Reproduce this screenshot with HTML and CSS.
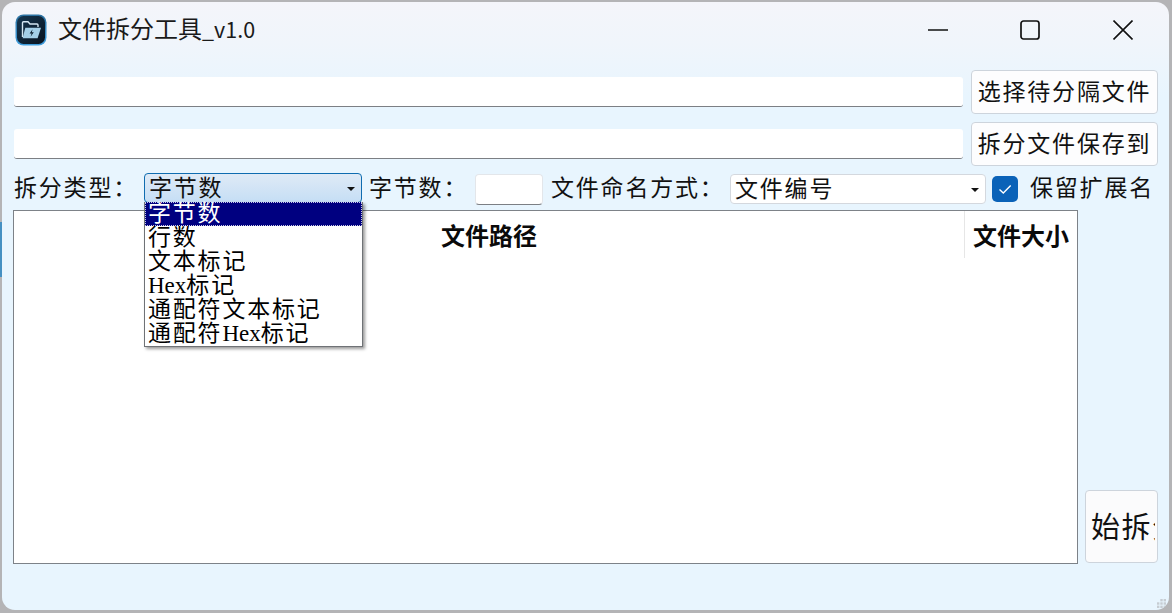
FILE: index.html
```html
<!DOCTYPE html>
<html lang="zh-CN">
<head>
<meta charset="utf-8">
<title>文件拆分工具_v1.0</title>
<link rel="stylesheet" href="styles.css">
</head>
<body>
<div class="window">
  <header class="titlebar">
    <svg class="app-icon" viewBox="0 0 32 32" aria-hidden="true">
      <defs>
        <linearGradient id="ring" x1="0" y1="0" x2="0" y2="1"><stop offset="0" stop-color="#2a6f9e"/><stop offset="1" stop-color="#3f9fe0"/></linearGradient>
        <linearGradient id="tile" x1="0" y1="0" x2="1" y2="1"><stop offset="0" stop-color="#143650"/><stop offset="1" stop-color="#0a1420"/></linearGradient>
      </defs>
      <rect x="0.5" y="0.5" width="31" height="31" rx="8" fill="url(#ring)"/>
      <rect x="2" y="2" width="28" height="28" rx="6.5" fill="url(#tile)"/>
      <path d="M7.5 23V8.8a1 1 0 0 1 1-1H13l2 2.2h7a1 1 0 0 1 1 1V13" fill="none" stroke="#d5e8f4" stroke-width="1.4"/>
      <path d="M10.3 13.8H26L22.6 24.2H7.6z" fill="#a4d0e8"/>
      <path d="M17.6 15.2l-3 4.4h2l-1 3.2 3.2-4.6h-2z" fill="#0e2233"/>
    </svg>
    <span class="title">文件拆分工具<span class="version">_v1.0</span></span>
    <div class="controls">
      <span class="ctl"><svg viewBox="0 0 20 20" width="20" height="20"><path d="M0 10h20" stroke="#111" stroke-width="1.6" fill="none"/></svg></span>
      <span class="ctl"><svg viewBox="0 0 20 20" width="20" height="20"><rect x="1" y="1" width="18" height="18" rx="2.5" stroke="#111" stroke-width="1.7" fill="none"/></svg></span>
      <span class="ctl"><svg viewBox="0 0 20 20" width="20" height="20"><path d="M0.5 0.5l19 19M19.5 0.5l-19 19" stroke="#111" stroke-width="1.6" fill="none"/></svg></span>
    </div>
  </header>

  <main class="content">
    <div class="path-row">
      <input class="line" type="text">
      <button class="btn"><span class="btn-text">选择待分隔文件</span></button>
    </div>
    <div class="path-row">
      <input class="line" type="text">
      <button class="btn"><span class="btn-text">拆分文件保存到</span></button>
    </div>

    <div class="options">
      <span class="label type-label">拆分类型：</span>
      <div class="combo combo-type open">
        <span class="combo-value">字节数</span><i class="caret"></i>
        <ul class="menu">
          <li class="current">字节数</li>
          <li>行数</li>
          <li>文本标记</li>
          <li><span class="latin">Hex</span>标记</li>
          <li>通配符文本标记</li>
          <li>通配符<span class="latin">Hex</span>标记</li>
        </ul>
      </div>
      <span class="label count-label">字节数：</span>
      <input class="count" type="text">
      <span class="label name-label">文件命名方式：</span>
      <div class="combo combo-name"><span class="combo-value">文件编号</span><i class="caret"></i></div>
      <span class="checkbox"><svg viewBox="0 0 26 26" width="26" height="26"><path d="M7.5 13.5l3.8 3.6 7.4-7.6" stroke="#fff" stroke-width="1.4" fill="none"/></svg></span>
      <span class="label keep-label">保留扩展名</span>
    </div>

    <div class="lower">
      <section class="table">
        <div class="thead">
          <div class="th th-path">文件路径</div>
          <div class="th th-size">文件大小</div>
        </div>
      </section>
      <div class="side">
        <button class="btn start"><span class="clip">开始拆分</span></button>
      </div>
    </div>
  </main>
  <svg class="grip" viewBox="0 0 9 9" width="9" height="9" aria-hidden="true">
    <g fill="#c6ccd2"><rect x="3.3" y="0" width="2.4" height="2.4"/><rect x="6.6" y="0" width="2.4" height="2.4"/><rect x="0" y="3.3" width="2.4" height="2.4"/><rect x="3.3" y="3.3" width="2.4" height="2.4"/><rect x="6.6" y="3.3" width="2.4" height="2.4"/><rect x="0" y="6.6" width="2.4" height="2.4"/><rect x="3.3" y="6.6" width="2.4" height="2.4"/><rect x="6.6" y="6.6" width="2.4" height="2.4"/></g>
  </svg>
</div>
</body>
</html>
```

FILE: styles.css
```css
* { box-sizing: border-box; }
html, body { margin: 0; height: 100%; overflow: hidden; }
body {
  position: relative;
  background: #b4b4b6;
  padding: 2px 3px 3px 2px;
  font-family: "Liberation Serif", "Noto Sans CJK SC", serif;
  color: #111;
}
body::before {
  content: "";
  position: absolute;
  left: 0;
  top: 222px;
  width: 2px;
  height: 55px;
  background: #4590c2;
}
.window {
  position: relative;
  height: 608px;
  border-radius: 13px;
  background: linear-gradient(180deg, #f4f5fa 0, #f0f5fb 42px, #e8f5fe 95px, #e8f5fe 100%);
  overflow: hidden;
}
.titlebar {
  height: 58px;
  display: flex;
  align-items: center;
  padding: 0 0 2px 13px;
}
.app-icon { width: 32px; height: 32px; flex: none; }
.title {
  margin-left: 11px;
  font-family: "Noto Sans CJK SC", "Noto Sans", sans-serif;
  font-size: 24px;
  line-height: 32px;
  color: #1a1a1a;
  margin-top: -3px;
}
.version { font-size: 21.5px; }
.controls { margin-left: auto; display: flex; }
.ctl { width: 92px; height: 40px; display: flex; align-items: center; justify-content: center; }
.ctl:last-child { width: 93px; }

.content { padding: 10px 11px 0 12px; display: flex; flex-direction: column; }
.path-row {
  display: grid;
  grid-template-columns: 1fr 187px;
  gap: 8px;
  align-items: center;
  height: 44px;
  margin-bottom: 8px;
}
.line {
  height: 30px;
  width: 100%;
  border: 0;
  border-bottom: 1px solid #7c7f84;
  border-radius: 3px;
  background: #fff;
  padding: 0;
  outline: none;
}
.btn {
  font: 23px/30px "Liberation Serif", "Noto Sans CJK SC", serif;
  letter-spacing: 1.8px;
  color: #111;
  background: #fdfdfe;
  border: 1px solid #cdd4dc;
  border-radius: 4px;
  padding: 0;
  height: 44px;
  white-space: nowrap;
}
.btn-text { display: block; padding-top: 2px; }
.options {
  display: flex;
  align-items: center;
  height: 32px;
  margin-top: -1px;
  font-size: 23px;
  letter-spacing: 1.8px;
}
.label { white-space: nowrap; line-height: 32px; }
.type-label { width: 130px; }
.count-label { width: 106px; margin-left: 7px; }
.name-label { width: 179px; margin-left: 8px; }
.keep-label { margin-left: 12px; }
.combo {
  position: relative;
  height: 30px;
  display: flex;
  align-items: center;
  padding-left: 4px;
  border: 1px solid #d4d8de;
  border-radius: 4px;
  background: #fff;
  line-height: 28px;
}
.combo-value { padding-top: 1px; }
.combo-type {
  width: 218px;
  margin-top: -2px;
  border-color: #0f6cb0;
  background: linear-gradient(180deg, #dfeaf6 0, #c5def5 100%);
}
.combo-name { width: 256px; }
.caret {
  position: absolute;
  right: 6px;
  top: 13px;
  border: 4px solid transparent;
  border-top-color: #111;
  border-bottom: 0;
}
.menu {
  position: absolute;
  z-index: 5;
  left: -1px;
  top: 28px;
  width: 219px;
  margin: 0;
  padding: 0;
  list-style: none;
  background: #fff;
  border: 1px solid #6f7276;
  border-top: 0;
  box-shadow: 2px 2px 3px rgba(0, 0, 0, 0.4);
  color: #000;
}
.menu li { height: 24px; line-height: 24px; padding-left: 3px; white-space: nowrap; }
.menu .latin { letter-spacing: 0; }
.menu .current {
  background: #000080;
  color: #fff;
  outline: 1px dotted #c9c9e6;
  outline-offset: -1px;
}
.count {
  width: 68px;
  height: 31px;
  border: 1px solid #e3e6ea;
  border-bottom-color: #7c7f84;
  border-radius: 4px;
  background: #fff;
  padding: 0;
  outline: none;
}
.checkbox {
  width: 26px;
  height: 26px;
  margin-left: 6px;
  border-radius: 5px;
  background: #0a62b8;
  display: flex;
}
.lower { display: flex; gap: 7px; margin-top: 5px; margin-left: -1px; }
.table {
  width: 1065px;
  height: 354px;
  background: #fff;
  border: 1px solid #7d8288;
}
.thead { display: flex; height: 47px; }
.th {
  font-family: "Noto Sans CJK SC", "Noto Sans", sans-serif;
  font-weight: 700;
  font-size: 24px;
  line-height: 47px;
  color: #0a0a0a;
  text-align: center;
  white-space: nowrap;
}
.th-path { flex: 1; }
.th-size { width: 113px; border-left: 1px solid #e6e6e6; }
.side { flex: 1; display: flex; align-items: flex-end; padding-bottom: 1px; }
.start {
  width: 73px;
  height: 73px;
  display: flex;
  align-items: center;
  justify-content: center;
  letter-spacing: 0;
  background: #fbfbfc;
}
.clip {
  display: flex;
  justify-content: center;
  width: 66px;
  margin-top: 3px;
  overflow: hidden;
  font-size: 29px;
  letter-spacing: 1.5px;
  line-height: 40px;
}
.grip { position: absolute; right: 3px; bottom: 2px; }
```
